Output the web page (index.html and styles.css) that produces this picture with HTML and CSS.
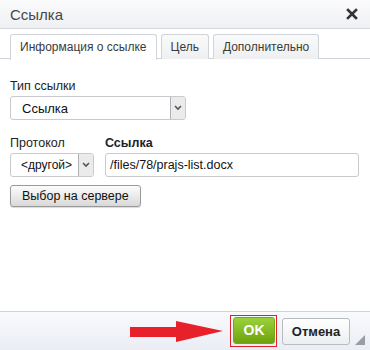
FILE: index.html
```
<html>
<head>
  <link rel="stylesheet" href="styles.css">
</head>
<body>
  <div class="dialog">
    <div class="title">
      <span>Ссылка</span>
      <svg class="close" width="12" height="12" viewBox="0 0 12 12">
        <path d="M2 2 L10 10 M10 2 L2 10" stroke="#333" stroke-width="2.6" stroke-linecap="square"/>
      </svg>
    </div>
    <div class="tabs">
      <div class="tab active">Информация о ссылке</div>
      <div class="tab">Цель</div>
      <div class="tab">Дополнительно</div>
    </div>
    <div class="content">
      <div class="field">
        <label>Тип ссылки</label>
        <div class="select wide">
          <span>Ссылка</span>
          <div class="arrow"><svg width="8" height="6" viewBox="0 0 8 6"><path d="M1 1 L4 4 L7 1" stroke="#555" stroke-width="1.6" fill="none"/></svg></div>
        </div>
      </div>
      <div class="row">
        <div class="field">
          <label>Протокол</label>
          <div class="select small">
            <span>&lt;другой&gt;</span>
            <div class="arrow"><svg width="8" height="6" viewBox="0 0 8 6"><path d="M1 1 L4 4 L7 1" stroke="#555" stroke-width="1.6" fill="none"/></svg></div>
          </div>
        </div>
        <div class="field grow">
          <label class="bold">Ссылка</label>
          <div class="input">/files/78/prajs-list.docx</div>
        </div>
      </div>
      <div class="btn-server">Выбор на сервере</div>
    </div>
    <div class="footer">
      <svg class="red-arrow" width="94" height="22" viewBox="0 0 94 22">
        <polygon points="0,6 46,6 46,0 93,10 46,21 46,16 0,16" fill="#e8202a"/>
      </svg>
      <div class="ok-wrap"><div class="btn ok">OK</div></div>
      <div class="btn cancel">Отмена</div>
      <div class="grip"></div>
    </div>
  </div>
</body>
</html>
```
FILE: styles.css
```
body {
  margin: 0;
  padding: 0;
  background: #fff;
  font-family: "Liberation Sans", Arial, sans-serif;
}

.dialog {
  width: 370px;
  height: 350px;
  display: flex;
  flex-direction: column;
  background: #fff;
  position: relative;
}

.title {
  height: 28px;
  border-bottom: 1px solid #d6d8dc;
  background: linear-gradient(#fbfbfc, #eef0f3);
  display: flex;
  align-items: center;
  justify-content: space-between;
  padding: 0 10px;
  font-size: 15px;
  color: #474747;
}

.close {
  margin-right: 2px;
}

.tabs {
  display: flex;
  gap: 4px;
  padding: 5px 10px 0;
  border-bottom: 1px solid #d1d4da;
  height: 24px;
  background: #fff;
}

.tab {
  height: 24px;
  line-height: 24px;
  padding: 0 9px;
  border: 1px solid #d1d4da;
  border-bottom: none;
  border-radius: 3px 3px 0 0;
  background: linear-gradient(#fafafa, #eeeff1);
  font-size: 12px;
  color: #3a3a3a;
}

.tab.active {
  background: #fff;
  height: 25px;
  margin-bottom: -1px;
}

.content {
  flex: 1;
  padding: 20px 10px 0;
}

.field label {
  display: block;
  font-size: 12.5px;
  color: #222;
  margin-bottom: 3px;
}

.field label.bold {
  font-weight: bold;
}

.select {
  height: 22px;
  border: 1px solid #c8cacd;
  border-radius: 3px;
  display: flex;
  align-items: center;
  justify-content: space-between;
  font-size: 13px;
  color: #111;
  background: #fff;
}

.select.wide {
  padding-left: 11px;
  width: 163px;
}

.select.small {
  width: 72px;
  padding-left: 10px;
  font-size: 12px;
}

.arrow {
  width: 14px;
  height: 22px;
  border-left: 1px solid #b0b2b5;
  background: #ebebeb;
  display: flex;
  align-items: center;
  justify-content: center;
  border-radius: 0 2px 2px 0;
}

.row {
  display: flex;
  gap: 11px;
  margin-top: 16px;
}

.grow {
  flex: 1;
}

.input {
  height: 22px;
  line-height: 22px;
  border: 1px solid #c8cacd;
  border-radius: 3px;
  padding-left: 4px;
  font-size: 12.5px;
  color: #111;
  width: 248px;
}

.btn-server {
  display: inline-block;
  margin-top: 8px;
  height: 20px;
  line-height: 20px;
  padding: 0 11px;
  border: 1px solid #9a9a9a;
  border-radius: 3px;
  background: linear-gradient(#fdfdfd, #d8d8d8);
  box-shadow: 0 1px 1px rgba(0,0,0,0.15);
  font-size: 12.5px;
  color: #111;
}

.footer {
  height: 38px;
  border-top: 1px solid #d0d2d6;
  background: linear-gradient(#f9fafc, #eaedf4);
  display: flex;
  align-items: center;
  justify-content: flex-end;
  padding-right: 20px;
}

.red-arrow {
  margin-right: 6px;
  margin-top: 2px;
}

.ok-wrap {
  border: 1px solid #e0202a;
  padding: 1px 1px 2px 2px;
  margin-right: 5px;
}

.btn {
  height: 25px;
  line-height: 25px;
  border-radius: 3px;
  text-align: center;
  font-size: 13px;
}

.ok {
  width: 40px;
  background: linear-gradient(#9ad23c, #6ea20d);
  border: 1px solid #78a81a;
  color: #fff;
  font-weight: bold;
  font-size: 14px;
}

.cancel {
  width: 66px;
  border: 1px solid #b8bcc2;
  background: linear-gradient(#ffffff, #eceef1);
  color: #222;
  font-weight: bold;
}

.grip {
  position: absolute;
  right: 5px;
  bottom: 5px;
  width: 0;
  height: 0;
  border-left: 10px solid transparent;
  border-bottom: 10px solid #9a9ca0;
}
```
